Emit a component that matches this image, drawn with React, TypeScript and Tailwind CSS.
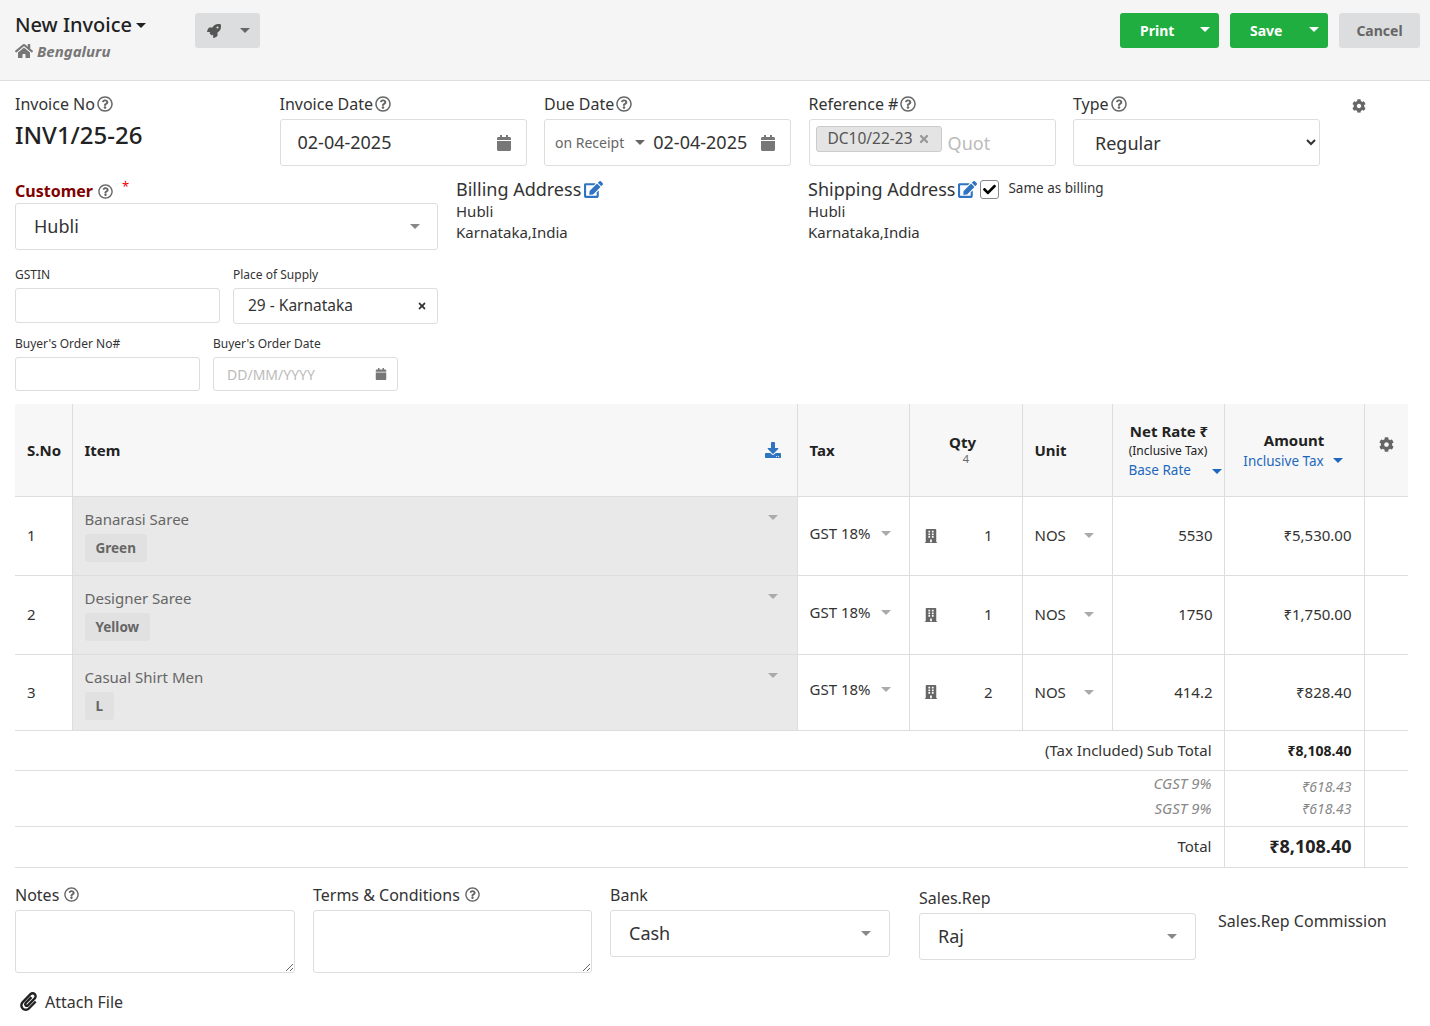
import React from "react";
import { FaBuilding, FaCalendar, FaCheck, FaCog, FaDownload, FaEdit, FaHome, FaPaperclip, FaRegQuestionCircle, FaRocket, FaTimes } from "react-icons/fa";

function Caret({ className = "border-t-[#888]" }: { className?: string }) {
  return <span className={"inline-block h-0 w-0 border-x-[5px] border-t-[5px] border-x-transparent " + className} />;
}

function Help({ className = "" }: { className?: string }) {
  return <FaRegQuestionCircle className={"inline-block text-[15px] text-[#666] " + className} />;
}

function Label({ text }: { text: string }) {
  return (
    <div className="flex h-[24px] items-center gap-[2px] text-[16px] text-[#333]">
      {text}
      <Help className="text-[16px]" />
    </div>
  );
}

function Cal({ size = "text-[16px]" }: { size?: string }) {
  return <FaCalendar className={"text-[#777] " + size} />;
}

const rows = [
  { n: "1", name: "Banarasi Saree", tag: "Green", qty: "1", rate: "5530", amt: "₹5,530.00", h: "h-[79px]" },
  { n: "2", name: "Designer Saree", tag: "Yellow", qty: "1", rate: "1750", amt: "₹1,750.00", h: "h-[79px]" },
  { n: "3", name: "Casual Shirt Men", tag: "L", qty: "2", rate: "414.2", amt: "₹828.40", h: "h-[76px]" },
];

export default function App() {
  return (
    <div className="h-[1026px] overflow-hidden bg-white font-['Lato',sans-serif] text-[#333]">
      <header className="flex h-[81px] items-start justify-between border-b border-[#ddd] bg-[#f5f5f5] pl-[15px] pr-[10px] pt-[13px]">
        <div className="flex items-start">
          <div className="w-[180px]">
            <div className="flex h-[24px] items-center gap-[4px] text-[20px] font-medium leading-none text-[#222]">
              New Invoice
              <Caret className="border-t-[#222]" />
            </div>
            <div className="mt-[3px] flex items-center gap-[4px] text-[15px] font-bold italic text-[#777]">
              <FaHome className="text-[18px]" />
              Bengaluru
            </div>
          </div>
          <div className="flex h-[35px] w-[65px] items-center justify-between rounded-[3px] bg-[#dcdddf] pl-[12px] pr-[10px] text-[#555]">
            <FaRocket className="text-[14px]" />
            <Caret className="border-t-[#666]" />
          </div>
        </div>
        <div className="flex items-center gap-[11px]">
          <div className="flex h-[35px] w-[99px] items-center justify-between rounded-[3px] bg-[#1fae3f] pl-[20px] pr-[9px] text-[14px] font-bold text-white">
            Print
            <Caret className="-mt-[3px] border-t-white" />
          </div>
          <div className="flex h-[35px] w-[98px] items-center justify-between rounded-[3px] bg-[#1fae3f] pl-[20px] pr-[9px] text-[14px] font-bold text-white">
            Save
            <Caret className="-mt-[3px] border-t-white" />
          </div>
          <div className="flex h-[35px] w-[81px] items-center justify-center rounded-[3px] bg-[#dcdddf] text-[14px] font-bold text-[#666]">Cancel</div>
        </div>
      </header>

      <main className="px-[15px]">
        <section className="flex gap-[17.5px] pt-[11px]">
          <div className="w-[247px]">
            <Label text="Invoice No" />
            <div className="mt-[4px] text-[24px] font-medium leading-[30px] text-[#222]">INV1/25-26</div>
          </div>
          <div className="w-[247px]">
            <Label text="Invoice Date" />
            <div className="mt-[3px] flex h-[47px] items-center justify-between rounded-[3px] border border-[#ddd] pl-[17px] pr-[14px] text-[18px]">
              02-04-2025
              <Cal />
            </div>
          </div>
          <div className="w-[247px]">
            <Label text="Due Date" />
            <div className="mt-[3px] flex h-[47px] items-center rounded-[3px] border border-[#ddd] pl-[10px] pr-[14px]">
              <span className="text-[14px] text-[#666]">on Receipt</span>
              <Caret className="ml-[11px] border-t-[#666]" />
              <span className="ml-[8px] flex-1 text-[18px]">02-04-2025</span>
              <Cal />
            </div>
          </div>
          <div className="w-[247px]">
            <Label text="Reference #" />
            <div className="mt-[3px] flex h-[47px] items-start rounded-[3px] border border-[#ddd] pl-[6px] pt-[6px]">
              <span className="flex h-[26px] items-center gap-[5px] rounded-[3px] border border-[#ccc] bg-[#e4e4e4] px-[11px] text-[15.5px] text-[#555]">
                DC10/22-23
                <FaTimes className="text-[12px] text-[#999]" />
              </span>
              <span className="ml-[6px] mt-[4px] text-[18px] text-[#bbb]">Quot</span>
            </div>
          </div>
          <div className="w-[247px]">
            <Label text="Type" />
            <select defaultValue="Regular" className="mt-[3px] h-[47px] w-full rounded-[3px] border border-[#ddd] bg-white pl-[17px] font-['Liberation_Sans',sans-serif] text-[18px] text-[#333]">
              <option>Regular</option>
            </select>
          </div>
          <FaCog className="ml-[14px] mt-[7px] text-[14px] text-[#666]" />
        </section>

        <section className="mt-[13px] flex">
          <div className="w-[423px]">
            <div className="flex h-[24px] items-center text-[16px] font-bold text-[#800000]">
              Customer
              <Help className="ml-[5px]" />
              <span className="mb-[8px] ml-[9px] text-[13px] font-normal text-[#e00]">*</span>
            </div>
            <div className="flex h-[47px] items-center justify-between rounded-[3px] border border-[#ddd] pl-[18px] pr-[17px] text-[18px]">
              Hubli
              <Caret />
            </div>
          </div>
          <div className="ml-[18px] w-[352px]">
            <div className="flex h-[20px] items-center gap-[3px] text-[18px] leading-none">
              Billing Address
              <FaEdit className="text-[19px] text-[#2f74c0]" />
            </div>
            <div className="mt-[2px] text-[15px] leading-[21px]">Hubli</div>
            <div className="mt-[0px] text-[15px] leading-[21px]">Karnataka,India</div>
          </div>
          <div className="ml-[0px]">
            <div className="flex h-[20px] items-center text-[18px] leading-none">
              Shipping Address
              <FaEdit className="ml-[3px] text-[19px] text-[#2f74c0]" />
              <span className="ml-[3px] flex h-[19px] w-[19px] items-center justify-center rounded-[3px] border border-[#888] bg-white">
                <FaCheck className="text-[13px] text-black" />
              </span>
              <span className="ml-[9px] text-[13.5px]">Same as billing</span>
            </div>
            <div className="mt-[2px] text-[15px] leading-[21px]">Hubli</div>
            <div className="mt-[0px] text-[15px] leading-[21px]">Karnataka,India</div>
          </div>
        </section>

        <section className="mt-[16px] flex gap-[13px]">
          <div className="w-[205px]">
            <div className="h-[17px] text-[12px] leading-[17px]">GSTIN</div>
            <div className="mt-[5px] h-[35px] rounded-[3px] border border-[#ddd]" />
          </div>
          <div className="w-[205px]">
            <div className="h-[17px] text-[12px] leading-[17px]">Place of Supply</div>
            <div className="mt-[5px] flex h-[36px] items-center justify-between rounded-[3px] border border-[#ddd] pl-[14px] pr-[10px] text-[15.5px]">
              29 - Karnataka
              <FaTimes className="text-[10px]" />
            </div>
          </div>
        </section>

        <section className="mt-[11px] flex gap-[13px]">
          <div className="w-[185px]">
            <div className="h-[17px] text-[12px] leading-[17px]">Buyer's Order No#</div>
            <div className="mt-[5px] h-[34px] rounded-[3px] border border-[#ddd]" />
          </div>
          <div className="w-[185px]">
            <div className="h-[17px] text-[12px] leading-[17px]">Buyer's Order Date</div>
            <div className="mt-[5px] flex h-[34px] items-center justify-between rounded-[3px] border border-[#ddd] pl-[13px] pr-[10px] text-[14px] text-[#bbb]">
              DD/MM/YYYY
              <FaCalendar className="text-[12px] text-[#777]" />
            </div>
          </div>
        </section>

        <table className="mt-[13px] w-[1393px] table-fixed border-collapse text-[15px]">
          <colgroup>
            <col className="w-[57px]" />
            <col className="w-[725px]" />
            <col className="w-[112px]" />
            <col className="w-[113px]" />
            <col className="w-[90px]" />
            <col className="w-[112px]" />
            <col className="w-[140px]" />
            <col className="w-[44px]" />
          </colgroup>
          <thead>
            <tr className="h-[92px] border-b border-[#ddd] bg-[#f7f7f7] text-left font-bold text-[#222]">
              <th className="border-r border-[#ddd] pl-[12px] font-bold">S.No</th>
              <th className="border-r border-[#ddd] px-[12px] font-bold">
                <div className="flex items-center justify-between pr-[4px]">
                  Item
                  <FaDownload className="text-[16px] text-[#2f74c0]" />
                </div>
              </th>
              <th className="border-r border-[#ddd] pl-[12px] font-bold">Tax</th>
              <th className="border-r border-[#ddd] text-center font-bold">
                <div className="pr-[6px] leading-[18px]">Qty</div>
                <div className="pl-[1px] text-[11px] font-normal leading-[16px] text-[#666]">4</div>
              </th>
              <th className="border-r border-[#ddd] pl-[12px] font-bold">Unit</th>
              <th className="border-r border-[#ddd] text-center font-bold">
                <div className="pl-[2px] leading-[20px]">Net Rate ₹</div>
                <div className="text-[12px] font-normal leading-[20px]">(Inclusive Tax)</div>
                <div className="flex items-center justify-between pl-[16px] pr-[2px] text-[13.5px] font-normal leading-[18px] text-[#1d68bd]">
                  Base Rate
                  <Caret className="mt-[3px] border-t-[#1d68bd]" />
                </div>
              </th>
              <th className="border-r border-[#ddd] text-center font-bold">
                <div className="leading-[22px]">Amount</div>
                <div className="flex items-center justify-center gap-[9px] pr-[2px] text-[13.5px] font-normal leading-[20px] text-[#1d68bd]">
                  Inclusive Tax
                  <Caret className="border-t-[#1d68bd]" />
                </div>
              </th>
              <th className="pb-[10px] text-center">
                <FaCog className="mx-auto text-[15px] text-[#666]" />
              </th>
            </tr>
          </thead>
          <tbody>
            {rows.map((r) => (
              <tr key={r.n} className={r.h + " border-b border-[#ddd]"}>
                <td className="border-r border-[#ddd] pl-[12px]">{r.n}</td>
                <td className="border-r border-[#ddd] bg-[#e9e9e9] px-[12px] align-top">
                  <div className="flex justify-between pr-[7px] pt-[13px] text-[#666]">
                    <span className="leading-[18px]">{r.name}</span>
                    <Caret className="mt-[5px] border-t-[#aaa]" />
                  </div>
                  <span className="mt-[6px] inline-block rounded-[3px] bg-[#e1e1e1] px-[11px] py-[5px] text-[13.5px] font-bold leading-[18px] text-[#666]">{r.tag}</span>
                </td>
                <td className="border-r border-[#ddd] pl-[12px] pb-[5px]">
                  <div className="flex items-center justify-between pr-[18px]">
                    GST 18%
                    <Caret className="border-t-[#aaa]" />
                  </div>
                </td>
                <td className="border-r border-[#ddd] px-[14px]">
                  <div className="flex items-center justify-between pr-[15px]">
                    <FaBuilding className="text-[14px] text-[#666]" />
                    {r.qty}
                  </div>
                </td>
                <td className="border-r border-[#ddd] pl-[12px]">
                  <div className="flex items-center justify-between pr-[18px]">
                    NOS
                    <Caret className="border-t-[#aaa]" />
                  </div>
                </td>
                <td className="border-r border-[#ddd] pr-[11px] text-right">{r.rate}</td>
                <td className="border-r border-[#ddd] pr-[12px] text-right">{r.amt}</td>
                <td />
              </tr>
            ))}
            <tr className="h-[40px] border-b border-[#ddd]">
              <td colSpan={6} className="border-r border-[#ddd] pr-[12px] text-right">(Tax Included) Sub Total</td>
              <td className="border-r border-[#ddd] pr-[12px] text-right font-bold text-[14px] text-[#222]">₹8,108.40</td>
              <td />
            </tr>
            <tr className="h-[56px] border-b border-[#ddd] italic text-[#888]">
              <td colSpan={6} className="border-r border-[#ddd] pr-[12px] pb-[4px] text-right leading-[25px]">
                <div>CGST 9%</div>
                <div>SGST 9%</div>
              </td>
              <td className="border-r border-[#ddd] pr-[12px] text-right text-[14px] leading-[22px]">
                <div>₹618.43</div>
                <div>₹618.43</div>
              </td>
              <td />
            </tr>
            <tr className="h-[41px] border-b border-[#ddd]">
              <td colSpan={6} className="border-r border-[#ddd] pr-[12px] text-right">Total</td>
              <td className="border-r border-[#ddd] pr-[12px] text-right text-[18px] font-bold text-[#222]">₹8,108.40</td>
              <td />
            </tr>
          </tbody>
        </table>

        <section className="flex items-start">
          <div className="mt-[15px] w-[280px]">
            <div className="flex h-[24px] items-center gap-[5px] text-[16px]">
              Notes
              <Help />
            </div>
            <textarea className="mt-[3px] block h-[63px] w-full rounded-[3px] border border-[#ddd]" />
          </div>
          <div className="ml-[18px] mt-[15px] w-[279px]">
            <div className="flex h-[24px] items-center gap-[5px] text-[16px]">
              Terms &amp; Conditions
              <Help />
            </div>
            <textarea className="mt-[3px] block h-[63px] w-full rounded-[3px] border border-[#ddd]" />
          </div>
          <div className="ml-[18px] mt-[15px] w-[280px]">
            <div className="flex h-[24px] items-center text-[16px]">Bank</div>
            <div className="mt-[3px] flex h-[47px] items-center justify-between rounded-[3px] border border-[#ddd] pl-[18px] pr-[18px] text-[18px]">
              Cash
              <Caret />
            </div>
          </div>
          <div className="ml-[29px] mt-[18px] w-[277px]">
            <div className="flex h-[24px] items-center text-[16px]">Sales.Rep</div>
            <div className="mt-[3px] flex h-[47px] items-center justify-between rounded-[3px] border border-[#ddd] pl-[18px] pr-[18px] text-[18px]">
              Raj
              <Caret />
            </div>
          </div>
          <div className="ml-[22px] mt-[41px] text-[16px] leading-[24px]">Sales.Rep Commission</div>
        </section>

        <div className="ml-[4px] mt-[17px] flex items-center gap-[7px] text-[16px]">
          <FaPaperclip className="text-[19px] text-[#222]" />
          Attach File
        </div>
      </main>
    </div>
  );
}
